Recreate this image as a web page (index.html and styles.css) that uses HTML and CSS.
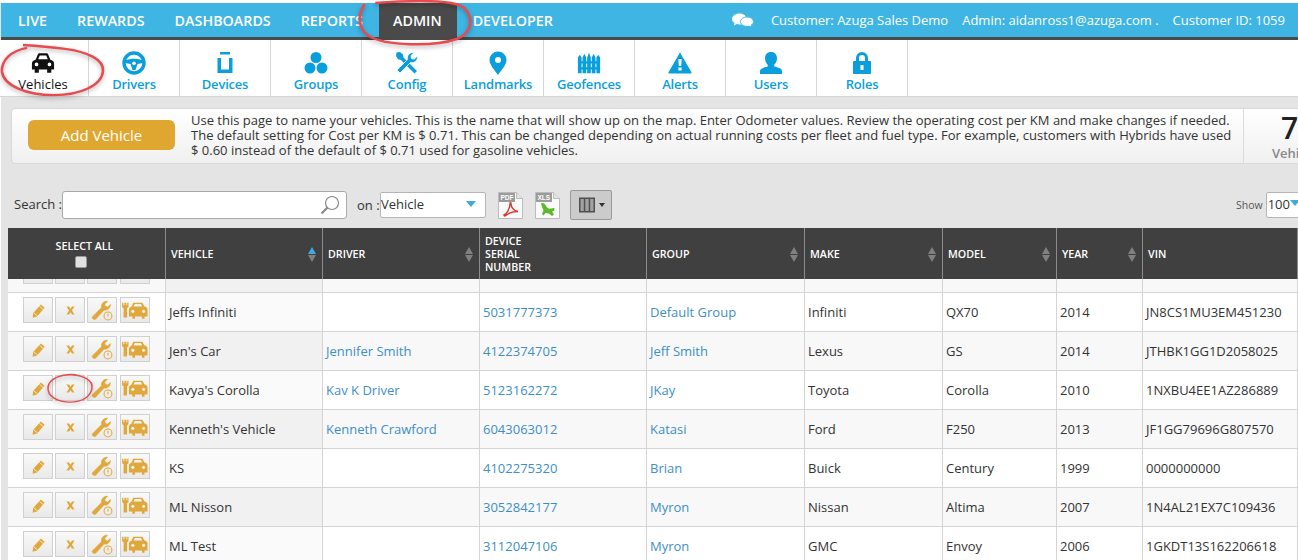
FILE: index.html
```html
<!DOCTYPE html>
<html lang="en">
<head>
<meta charset="utf-8">
<title>Vehicles - Admin</title>
<link rel="stylesheet" href="styles.css">
</head>
<body>
<svg class="defs" width="0" height="0">
  <defs>
    <symbol id="i-pencil" viewBox="0 0 16 16"><path d="M10.500 1.500l4 3.500-8 9.500-4.800 1.200.6-5z" fill="currentColor"/><path d="M3 10.500l4 3.300M9 3.500l3.800 3.300" stroke="#f4f0e6" stroke-width=".9" fill="none"/></symbol>
    <symbol id="i-x" viewBox="0 0 16 16"><path d="M3 3h3.200L8 5.800 9.800 3H13L9.700 8l3.300 5H9.800L8 10.200 6.200 13H3l3.300-5z" fill="currentColor"/></symbol>
    <symbol id="i-service" viewBox="0 0 24 24"><path d="M1.500 19.500l10-10c-.8-3.500 2-7.500 6.500-7l-3 3 .6 2.700 2.700.6 2.700-2.700c.4 3.600-3 6.800-6.700 5.900L5 22c-1.500 1.200-4.500-1-3.500-2.500z" fill="currentColor" stroke="currentColor" stroke-width=".8"/><circle cx="18.500" cy="18.500" r="4.300" fill="none" stroke="currentColor" stroke-width="1.100"/><path d="M18.500 16v3" stroke="currentColor" stroke-width="1.200"/></symbol>
    <symbol id="i-carfix" viewBox="0 0 30 22"><path d="M11 6.500l2-4.500h10.500l2.500 4.500c2 .4 3.500 1.500 3.500 3.500v8h-3.500v2.500h-3V18H15v2.500h-3V18H8v-8c0-1.500 1.800-3 3-3.500zM13.300 6.500h10l-1.500-3h-7z" fill="currentColor" fill-rule="evenodd"/><circle cx="12.500" cy="12" r="1.800" fill="#f3efe6"/><circle cx="25" cy="12" r="1.800" fill="#f3efe6"/><path d="M0 2v4c0 1.200.8 2 1.800 2.400V19h4V8.400C6.800 8 7.500 7.200 7.500 6V2H6v3H5V2H2.700v3H1.500V2z" fill="currentColor"/></symbol>
  </defs>
</svg>

<header class="topbar">
  <nav class="mainnav">
    <a class="mainlink">LIVE</a>
    <a class="mainlink">REWARDS</a>
    <a class="mainlink">DASHBOARDS</a>
    <a class="mainlink">REPORTS</a>
    <a class="mainlink active">ADMIN</a>
    <a class="mainlink">DEVELOPER</a>
  </nav>
  <div class="account">
    <svg class="chat" viewBox="0 0 24 16"><path d="M8.500 1C4.400 1 1 3.400 1 6.500c0 1.700 1 3.200 2.600 4.200L2.800 13l3-1.400c.9.300 1.800.4 2.700.4 4.100 0 7-2.400 7-5.500S12.600 1 8.500 1z" fill="#fff"/><path d="M16 4.500c-3.600 0-6.500 2.100-6.500 4.700s2.900 4.700 6.500 4.700c.7 0 1.400-.1 2-.3l2.800 1.400-.6-2.400c1.400-.8 2.300-2 2.300-3.400 0-2.600-2.900-4.700-6.500-4.700z" fill="#fff" stroke="#3fb5e3" stroke-width="1"/></svg>
    <span>Customer: Azuga Sales Demo</span>
    <span>Admin: aidanross1@azuga.com .</span>
    <span>Customer ID: 1059</span>
  </div>
</header>

<nav class="subnav">
  <a class="tab current">
    <svg class="tabicon" viewBox="0 0 26 22"><path d="M5 7.500L7.500 1.500C7.800.8 8.300.5 9 .5h8c.7 0 1.200.3 1.500 1L21 7.500c2.200.5 4 1.700 4 4V18h-3v3.500h-4.500V18h-9v3.500H4V18H1v-6.500c0-2.300 1.800-3.500 4-4zM7.800 7h10.400l-1.700-4h-7zM6 14.500a2 2 0 1 0 0-4 2 2 0 0 0 0 4zm14 0a2 2 0 1 0 0-4 2 2 0 0 0 0 4z" fill="currentColor" fill-rule="evenodd"/></svg>
    <span>Vehicles</span>
  </a>
  <a class="tab">
    <svg class="tabicon" viewBox="0 0 24 24"><circle cx="12" cy="12" r="10" fill="none" stroke="currentColor" stroke-width="3.400"/><path d="M3 9.500c5-2.400 13-2.400 18 0l.3 2.500-5.800 1-2 6h-3l-2-6-5.800-1z" fill="currentColor"/><circle cx="12" cy="12.200" r="1.800" fill="#fff"/></svg>
    <span>Drivers</span>
  </a>
  <a class="tab">
    <svg class="tabicon" viewBox="0 0 24 24"><path d="M7 1h10v2.500H7zM4.500 7H8v11.500h8V7h3.500v15h-15z" fill="currentColor"/></svg>
    <span>Devices</span>
  </a>
  <a class="tab">
    <svg class="tabicon" viewBox="0 0 24 24"><circle cx="12" cy="6.500" r="5.500" fill="currentColor"/><circle cx="6" cy="17" r="5.500" fill="currentColor"/><circle cx="18" cy="17" r="5.500" fill="currentColor"/></svg>
    <span>Groups</span>
  </a>
  <a class="tab">
    <svg class="tabicon" viewBox="0 0 24 24"><path d="M1.500 1.500l3.500-.5 3 2.500.5 3 13.500 13.500-2.500 2.500L6 9 3 8.300 1 5z" fill="currentColor"/><path d="M2 19l10.500-10.500c-1-3.500 2-7.800 6.500-7l-3 3.300.5 2.800 2.800.5 3.200-3.100c.8 4.500-3.500 7.500-7 6.500L5 22z" fill="currentColor" stroke="#fff" stroke-width=".8"/></svg>
    <span>Config</span>
  </a>
  <a class="tab">
    <svg class="tabicon" viewBox="0 0 24 24"><path d="M12 .5a8.500 8.500 0 0 0-8.500 8.500c0 5 5.500 10.500 8.500 15 3-4.500 8.500-10 8.500-15A8.500 8.500 0 0 0 12 .5zm0 5.500a3 3 0 1 1 0 6 3 3 0 0 1 0-6z" fill="currentColor" fill-rule="evenodd"/></svg>
    <span>Landmarks</span>
  </a>
  <a class="tab">
    <svg class="tabicon" viewBox="0 0 26 24"><path d="M1 23V6l2-3 2 3v17zM6 23V6l2-4 2 4v17zM11 23V6l2-5 2 5v17zM16 23V6l2-4 2 4v17zM21 23V6l2-3 2 3v17z" fill="currentColor"/><path d="M1 10h24v2.500H1zM1 16.500h24V19H1z" fill="currentColor"/></svg>
    <span>Geofences</span>
  </a>
  <a class="tab">
    <svg class="tabicon" viewBox="0 0 24 24"><path d="M12 1.500l11.500 19.700c.3.600 0 1.300-.8 1.300H1.300c-.8 0-1.100-.7-.8-1.300zM10.300 8l.5 7h2.400l.5-7zm.1 8.500v3h3.200v-3z" fill="currentColor" fill-rule="evenodd"/></svg>
    <span>Alerts</span>
  </a>
  <a class="tab">
    <svg class="tabicon" viewBox="0 0 24 24"><path d="M12 1c3.800 0 6 2.700 6 6.200 0 2.700-1.200 5-2.700 6.400v1.900c3.300 1 7.700 1.800 7.700 4.500V23H1v-2.900c0-2.700 4.400-3.500 7.700-4.500v-1.900C7.200 12.200 6 9.900 6 7.200 6 3.700 8.200 1 12 1z" fill="currentColor"/></svg>
    <span>Users</span>
  </a>
  <a class="tab">
    <svg class="tabicon" viewBox="0 0 24 24"><path d="M4 10h2V7a6 6 0 0 1 12 0v3h2c.7 0 1 .4 1 1v11c0 .7-.4 1-1 1H4c-.7 0-1-.4-1-1V11c0-.7.4-1 1-1zm5 0h6V7a3 3 0 0 0-6 0zm1.500 4v5h3v-5z" fill="currentColor" fill-rule="evenodd"/></svg>
    <span>Roles</span>
  </a>
</nav>

<main class="content">
  <section class="infocard">
    <button class="addbtn">Add Vehicle</button>
    <p class="infotext">Use this page to name your vehicles. This is the name that will show up on the map. Enter Odometer values. Review the operating cost per KM and make changes if needed.<br>The default setting for Cost per KM is $ 0.71. This can be changed depending on actual running costs per fleet and fuel type. For example, customers with Hybrids have used<br>$ 0.60 instead of the default of $ 0.71 used for gasoline vehicles.</p>
    <div class="stat"><strong>7</strong><span>Vehicles</span></div>
  </section>

  <section class="toolbar">
    <label class="searchlabel">Search :</label>
    <div class="searchbox">
      <svg class="lens" viewBox="0 0 20 20"><circle cx="12" cy="8" r="6.500" fill="#fff" stroke="#888" stroke-width="1.200"/><path d="M7.500 12.500l-6 6" stroke="#888" stroke-width="2.200"/></svg>
    </div>
    <span class="onlabel">on :</span>
    <div class="picker onpicker">Vehicle<i class="caret"></i></div>
    <svg class="fileicon" viewBox="0 0 25 27"><path d="M.5.500h18l6 6v20H.500z" fill="#fafafa" stroke="#bbb"/><path d="M18.500.500v6h6" fill="#e4e4e4" stroke="#bbb"/><rect x="1" y="1" width="16" height="9" fill="#9b9b9b"/><text x="2.500" y="8.300" class="filetag">PDF</text><path d="M6 23c3-1 6-7 6-11.500 0-1 1-1 1 0 0 4 3 7.500 7 8-4 0-9 1-13 4.500z" fill="none" stroke="#d8392f" stroke-width="1.400"/></svg>
    <svg class="fileicon xls" viewBox="0 0 25 27"><path d="M.5.500h18l6 6v20H.500z" fill="#fafafa" stroke="#bbb"/><path d="M18.500.500v6h6" fill="#e4e4e4" stroke="#bbb"/><rect x="1" y="1" width="16" height="9" fill="#9b9b9b"/><text x="2.500" y="8.300" class="filetag">XLS</text><path d="M6 11.500c2-1 4 0 5 2.500 1 2 3 3 5 2.500l3-.5c1 1 .5 2.500-.5 3l-1.500.5 2 3-2 1.500-3-2.500-3.500-.5-2 2.500-1.500-1.500 1.500-3.500C8 16.500 6.500 14 6 11.500z" fill="#5cb82c"/></svg>
    <button class="columnsbtn">
      <svg class="colicon" viewBox="0 0 18 18"><rect x="1" y="1.500" width="16" height="15" fill="#4f4f4f"/><path d="M2.500 3h3.300v12H2.500zM7.300 3h3.400v12H7.300zM12.200 3h3.300v12h-3.300z" fill="#a2a2a2"/></svg>
      <i class="minicaret"></i>
    </button>
    <div class="showgroup">
      <span class="showlabel">Show</span>
      <div class="picker showpicker">100<i class="caret"></i></div>
    </div>
  </section>

  <table class="grid">
    <colgroup>
      <col class="c-act"><col class="c-veh"><col class="c-drv"><col class="c-ser"><col class="c-grp"><col class="c-mk"><col class="c-mdl"><col class="c-yr"><col class="c-vin">
    </colgroup>
    <thead>
      <tr>
        <th class="selectall"><div>SELECT ALL</div><i class="check"></i></th>
        <th><div class="hcell">VEHICLE<i class="sort up"></i></div></th>
        <th><div class="hcell">DRIVER<i class="sort"></i></div></th>
        <th><div class="hcell">DEVICE<br>SERIAL<br>NUMBER</div></th>
        <th><div class="hcell">GROUP<i class="sort"></i></div></th>
        <th><div class="hcell">MAKE<i class="sort"></i></div></th>
        <th><div class="hcell">MODEL<i class="sort"></i></div></th>
        <th><div class="hcell">YEAR<i class="sort"></i></div></th>
        <th><div class="hcell">VIN</div></th>
      </tr>
    </thead>
    <tbody>
      <tr class="stub">
        <td><div class="clip"><div class="actions"><b class="act"></b><b class="act"></b><b class="act"></b><b class="act"></b></div></div></td>
        <td class="sorted"></td><td></td><td></td><td></td><td></td><td></td><td></td><td></td>
      </tr>
      <tr>
        <td><div class="actions"><b class="act"><svg class="g16"><use href="#i-pencil"/></svg></b><b class="act"><svg class="g14"><use href="#i-x"/></svg></b><b class="act"><svg class="g18"><use href="#i-service"/></svg></b><b class="act"><svg class="g22"><use href="#i-carfix"/></svg></b></div></td>
        <td class="sorted">Jeffs Infiniti</td><td></td><td><a>5031777373</a></td><td><a>Default Group</a></td><td>Infiniti</td><td>QX70</td><td>2014</td><td>JN8CS1MU3EM451230</td>
      </tr>
      <tr>
        <td><div class="actions"><b class="act"><svg class="g16"><use href="#i-pencil"/></svg></b><b class="act"><svg class="g14"><use href="#i-x"/></svg></b><b class="act"><svg class="g18"><use href="#i-service"/></svg></b><b class="act"><svg class="g22"><use href="#i-carfix"/></svg></b></div></td>
        <td class="sorted">Jen's Car</td><td><a>Jennifer Smith</a></td><td><a>4122374705</a></td><td><a>Jeff Smith</a></td><td>Lexus</td><td>GS</td><td>2014</td><td>JTHBK1GG1D2058025</td>
      </tr>
      <tr>
        <td><div class="actions"><b class="act"><svg class="g16"><use href="#i-pencil"/></svg></b><b class="act"><svg class="g14"><use href="#i-x"/></svg></b><b class="act"><svg class="g18"><use href="#i-service"/></svg></b><b class="act"><svg class="g22"><use href="#i-carfix"/></svg></b></div></td>
        <td class="sorted">Kavya's Corolla</td><td><a>Kav K Driver</a></td><td><a>5123162272</a></td><td><a>JKay</a></td><td>Toyota</td><td>Corolla</td><td>2010</td><td>1NXBU4EE1AZ286889</td>
      </tr>
      <tr>
        <td><div class="actions"><b class="act"><svg class="g16"><use href="#i-pencil"/></svg></b><b class="act"><svg class="g14"><use href="#i-x"/></svg></b><b class="act"><svg class="g18"><use href="#i-service"/></svg></b><b class="act"><svg class="g22"><use href="#i-carfix"/></svg></b></div></td>
        <td class="sorted">Kenneth's Vehicle</td><td><a>Kenneth Crawford</a></td><td><a>6043063012</a></td><td><a>Katasi</a></td><td>Ford</td><td>F250</td><td>2013</td><td>JF1GG79696G807570</td>
      </tr>
      <tr>
        <td><div class="actions"><b class="act"><svg class="g16"><use href="#i-pencil"/></svg></b><b class="act"><svg class="g14"><use href="#i-x"/></svg></b><b class="act"><svg class="g18"><use href="#i-service"/></svg></b><b class="act"><svg class="g22"><use href="#i-carfix"/></svg></b></div></td>
        <td class="sorted">KS</td><td></td><td><a>4102275320</a></td><td><a>Brian</a></td><td>Buick</td><td>Century</td><td>1999</td><td>0000000000</td>
      </tr>
      <tr>
        <td><div class="actions"><b class="act"><svg class="g16"><use href="#i-pencil"/></svg></b><b class="act"><svg class="g14"><use href="#i-x"/></svg></b><b class="act"><svg class="g18"><use href="#i-service"/></svg></b><b class="act"><svg class="g22"><use href="#i-carfix"/></svg></b></div></td>
        <td class="sorted">ML Nisson</td><td></td><td><a>3052842177</a></td><td><a>Myron</a></td><td>Nissan</td><td>Altima</td><td>2007</td><td>1N4AL21EX7C109436</td>
      </tr>
      <tr>
        <td><div class="actions"><b class="act"><svg class="g16"><use href="#i-pencil"/></svg></b><b class="act"><svg class="g14"><use href="#i-x"/></svg></b><b class="act"><svg class="g18"><use href="#i-service"/></svg></b><b class="act"><svg class="g22"><use href="#i-carfix"/></svg></b></div></td>
        <td class="sorted">ML Test</td><td></td><td><a>3112047106</a></td><td><a>Myron</a></td><td>GMC</td><td>Envoy</td><td>2006</td><td>1GKDT13S162206618</td>
      </tr>
    </tbody>
  </table>
</main>

<svg class="ink ink-admin" viewBox="0 0 112 50" preserveAspectRatio="none"><path d="M8 4C2 14 1 28 12 36c16 10 60 11 82 3 14-6 16-20 8-30C98 4 84 1 60 1 44 1 30 2 18 3"/></svg>
<svg class="ink ink-vehicles" viewBox="0 0 108 56" preserveAspectRatio="none"><path d="M28 4C12 7 2 17 3 29c2 14 24 24 52 24 26 0 48-10 49-25C105 16 88 8 66 5 50 3 38 2 24 1"/></svg>
<svg class="ink ink-delete" viewBox="0 0 48 34" preserveAspectRatio="none"><path d="M30 3C16 1 3 7 2 16c-1 10 10 16 22 16 12 0 21-6 22-15 1-8-8-13-20-14"/></svg>
</body>
</html>
```

FILE: styles.css
```css
* { box-sizing: border-box; }
html, body { margin: 0; height: 560px; overflow: hidden; }
body {
  position: relative;
  padding-top: 3px;
  background: #e4e4e4;
  font-family: "Open Sans", "Liberation Sans", sans-serif;
  font-size: 13px;
  color: #333;
}
body::before {
  content: "";
  position: absolute;
  inset: 0 0 auto 0;
  height: 3px;
  background: #fff;
}
.defs { position: absolute; }

.topbar {
  display: flex;
  justify-content: space-between;
  height: 37px;
  margin-left: 1px;
  background: #3fb5e3;
  border-bottom: 3px solid #4a4a4a;
  color: #fff;
}
.mainnav { display: flex; padding-left: 17px; }
.mainlink {
  display: flex;
  align-items: center;
  height: 34px;
  margin-right: 30px;
  font-size: 14.300px;
  font-weight: 600;
}
.mainlink.active {
  margin: 0 16px 0 -14px;
  padding: 0 15px 0 14px;
  background: #4a4a4a;
}
.account {
  display: flex;
  align-items: center;
  gap: 14px;
  height: 34px;
  padding-right: 13px;
  font-size: 13px;
}
.chat { width: 24px; height: 17px; margin-right: 2px; }

.subnav {
  display: flex;
  height: 57px;
  background: #fff;
  border-bottom: 1px solid #d6d6d6;
}
.tab {
  display: flex;
  flex-direction: column;
  align-items: center;
  width: 91px;
  padding-top: 11px;
  border-right: 1px solid #d6d6d6;
  color: #0a9fdc;
  font-size: 13px;
  font-weight: 600;
  letter-spacing: -.2px;
}
.tab:first-child { width: 89px; padding-right: 2px; }
.tab.current { color: #111; font-weight: 400; letter-spacing: 0; }
.tabicon { width: 24px; height: 24px; }
.tab span { line-height: 18px; }

.content {
  padding: 11px 0 0 7px;
  border-left: 1px solid #fff;
}

.infocard {
  display: flex;
  align-items: center;
  width: 1310px;
  height: 56px;
  margin-left: 3px;
  padding: 0 0 2px 16px;
  border: 1px solid #d9d9d9;
  border-radius: 4px;
  background: linear-gradient(#fff, #f0f0f0);
}
.addbtn {
  flex: none;
  width: 147px;
  height: 30px;
  border: 0;
  border-radius: 6px;
  background: #dfa72f;
  color: #fff;
  font: 15px "Open Sans", sans-serif;
}
.infotext {
  flex: none;
  width: 1052px;
  margin: 0 0 0 16px;
  font-size: 13px;
  line-height: 15px;
  white-space: nowrap;
}
.stat {
  display: flex;
  flex-direction: column;
  align-items: flex-start;
  align-self: stretch;
  width: 80px;
  margin-bottom: -2px;
  padding-left: 28px;
  border-left: 1px solid #dcdcdc;
}
.stat strong {
  margin-left: 9px;
  font-size: 30px;
  font-weight: 600;
  color: #222;
  line-height: 37px;
}
.stat span { font-size: 13px; color: #888; line-height: 14px; font-weight: 600; }

.toolbar {
  display: flex;
  align-items: center;
  height: 32px;
  margin-top: 25px;
  padding-left: 6px;
}
.searchlabel { width: 48px; padding-bottom: 2px; }
.searchbox {
  position: relative;
  width: 285px;
  height: 28px;
  background: #fff;
  border: 1px solid #a9a9a9;
  border-radius: 3px;
}
.lens { position: absolute; right: 6px; top: 3px; width: 20px; height: 20px; }
.onlabel { margin-left: 10px; width: 23px; padding-bottom: 1px; }
.picker {
  position: relative;
  height: 26px;
  line-height: 23px;
  background: #fff;
  border: 1px solid #b5b5b5;
  border-radius: 2px;
}
.onpicker { width: 106px; }
.caret {
  position: absolute;
  top: 8px;
  right: 9px;
  border: 5px solid transparent;
  border-top: 6px solid #3fa9e0;
  border-bottom: 0;
}
.fileicon { width: 25px; height: 27px; margin-left: 12px; }
.filetag { font: 700 6.500px "Liberation Sans", sans-serif; fill: #fff; }
.columnsbtn {
  display: flex;
  align-items: center;
  justify-content: center;
  gap: 3px;
  width: 42px;
  height: 30px;
  margin-left: 10px;
  padding: 0;
  background: #cbcbcb;
  border: 1px solid #999;
  border-radius: 2px;
}
.colicon { width: 18px; height: 18px; }
.minicaret {
  border: 3px solid transparent;
  border-top: 4px solid #333;
  border-bottom: 0;
}
.showgroup {
  display: flex;
  flex: none;
  align-items: center;
  gap: 3px;
  width: 62px;
  margin-left: auto;
}
.showlabel { font-size: 10.500px; color: #555; }
.showpicker { flex: none; width: 40px; padding-left: 1px; }
.showpicker .caret { right: 5px; top: 7px; }

.grid {
  table-layout: fixed;
  border-collapse: separate;
  border-spacing: 0;
  width: 1290px;
  margin-top: 7px;
  background: #fff;
}
.c-act { width: 158px; }
.c-veh { width: 157px; }
.c-drv { width: 157px; }
.c-ser { width: 167px; }
.c-grp { width: 158px; }
.c-mk { width: 138px; }
.c-mdl { width: 114px; }
.c-yr { width: 86px; }
.c-vin { width: 155px; }

.grid th {
  height: 51px;
  padding: 2px 5px 0;
  background: #404040;
  border-right: 1px solid #8c8c8c;
  color: #fff;
  font-size: 10.700px;
  font-weight: 600;
  line-height: 13px;
  text-align: left;
}
.grid th.selectall { padding: 3px 5px 0; text-align: center; }
.selectall div { margin-bottom: 3px; padding-right: 4px; }
.check {
  display: inline-block;
  width: 12px;
  height: 12px;
  margin-right: 11px;
  background: #e0e0e0;
  border: 1px solid #999;
  border-radius: 2px;
}
.hcell { position: relative; }
.sort {
  position: absolute;
  right: 0;
  top: 50%;
  width: 9px;
  height: 15px;
  margin-top: -8px;
}
.sort::before, .sort::after {
  content: "";
  position: absolute;
  left: 0;
  border-left: 4.500px solid transparent;
  border-right: 4.500px solid transparent;
}
.sort::before { top: 0; border-bottom: 7px solid #808080; }
.sort::after { bottom: 0; border-top: 7px solid #808080; }
.sort.up::before { border-bottom-color: #3fa9e0; }

.grid td {
  height: 39px;
  padding: 0 0 0 3px;
  border-right: 1px solid #d4d4d4;
  border-bottom: 1px solid #d4d4d4;
  white-space: nowrap;
  overflow: hidden;
}
.grid tbody tr td:first-child { vertical-align: top; padding: 4px 0 0; }
.grid tbody tr:nth-child(odd) td { background: #f8f8f8; }
.grid tbody tr:nth-child(even) td.sorted { background: #fafafa; }
.grid tbody tr:nth-child(odd) td.sorted { background: #f1f1f1; }
.grid a { color: #3d8fc6; }
.grid tbody tr.stub td { height: 14px; padding: 0; }
.clip { position: relative; height: 5px; overflow: hidden; }
.clip .actions { position: absolute; left: 0; bottom: 0; }
.actions { display: flex; gap: 2px; padding-left: 15px; }
.act {
  display: flex;
  flex: none;
  align-items: center;
  justify-content: center;
  width: 30px;
  height: 26px;
  border: 1px solid #d0d0d0;
  background: linear-gradient(#f9f9f9, #e9e9e9);
  color: #e0a83a;
}
.act:last-child { margin-left: 1px; }
.g14 { width: 13px; height: 13px; }
.g16 { width: 15px; height: 15px; }
.g18 { width: 22px; height: 22px; }
.g22 { width: 26px; height: 19px; }

.ink {
  position: absolute;
  overflow: visible;
  fill: none;
  stroke: #e84a4e;
  stroke-width: 2.500;
  filter: drop-shadow(0 2px 2px rgba(0, 0, 0, .3));
}
.ink-admin { left: 356px; top: 0; width: 120px; height: 50px; }
.ink-vehicles { left: -1px; top: 44px; width: 108px; height: 54px; }
.ink-delete { left: 46px; top: 372px; width: 48px; height: 32px; stroke-width: 1.500; }
```
